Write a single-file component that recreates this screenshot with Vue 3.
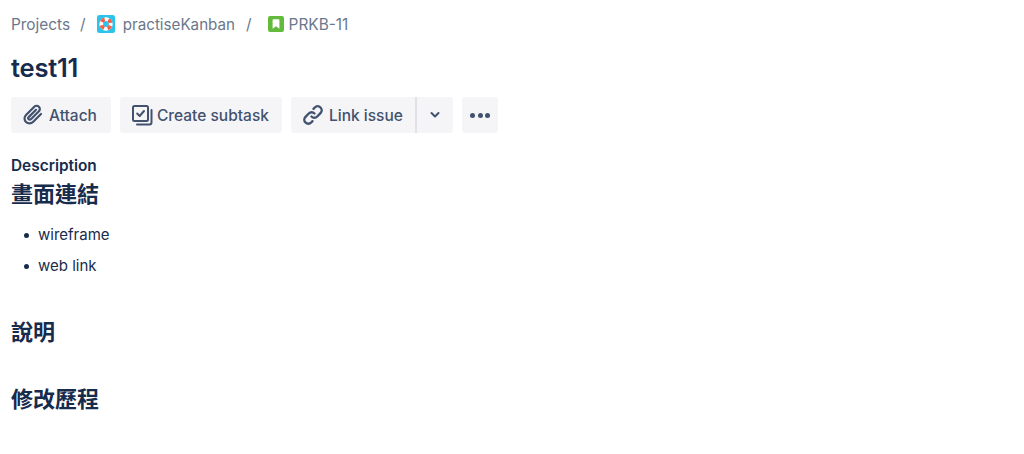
<script setup>
const items = ['wireframe', 'web link']
</script>

<template>
  <main class="page">
    <nav class="crumbs">
      <span>Projects</span>
      <span class="sep first">/</span>
      <svg class="proj" width="18" height="18" viewBox="0 0 18 18">
        <rect width="18" height="18" rx="2.5" fill="#2ac4ea" />
        <circle cx="9" cy="9" r="4.8" fill="none" stroke="#fff" stroke-width="3.8" />
        <circle cx="9" cy="9" r="4.8" fill="none" stroke="#f0604a" stroke-width="3.8" stroke-dasharray="3.77 3.77" stroke-dashoffset="-1.885" />
      </svg>
      <span class="pname">practiseKanban</span>
      <span class="sep second">/</span>
      <svg class="story" width="16" height="16" viewBox="0 0 16 16">
        <rect width="16" height="16" rx="2" fill="#63ba3c" />
        <path d="M4.6 4a.8.8 0 0 1 .8-.8h5.2a.8.8 0 0 1 .8.8v8.8L8 10.2l-3.4 2.6z" fill="#fff" />
      </svg>
      <span>PRKB-11</span>
    </nav>

    <h1>test11</h1>

    <div class="actions">
      <button class="btn attach">
        <svg width="24" height="24" viewBox="0 0 24 24" fill="none" stroke="#42526e" stroke-width="2.2" stroke-linecap="round" stroke-linejoin="round">
          <path d="M20 11l-8 8a4.9 4.9 0 0 1-7-7l8.3-8.3a3.2 3.2 0 0 1 4.6 4.6l-8 8a1.5 1.5 0 0 1-2.2-2.2l7.3-7.3" />
        </svg>
        Attach
      </button>
      <button class="btn subtask">
        <svg width="24" height="24" viewBox="0 0 24 24" fill="none" stroke="#42526e" stroke-width="2" stroke-linecap="round" stroke-linejoin="round">
          <rect x="3" y="3" width="15" height="15" rx="1.5" />
          <path d="M7.2 10.5l2.5 2.5 4.3-5" />
          <path d="M21.5 7v12.5a2 2 0 0 1-2 2H7" />
        </svg>
        Create subtask
      </button>
      <div class="split">
        <button class="btn link">
          <svg width="24" height="24" viewBox="0 0 24 24" fill="none" stroke="#42526e" stroke-width="2.4" stroke-linecap="round" stroke-linejoin="round">
            <path d="M10.5 13.5a4 4 0 0 0 5.7 0l3.3-3.3a4 4 0 0 0-5.7-5.7L12.5 5.8" />
            <path d="M13.5 10.5a4 4 0 0 0-5.7 0l-3.3 3.3a4 4 0 0 0 5.7 5.7l1.3-1.3" />
          </svg>
          Link issue
        </button>
        <button class="btn caret">
          <svg width="12" height="8" viewBox="0 0 12 8" fill="none" stroke="#42526e" stroke-width="2" stroke-linecap="round" stroke-linejoin="round">
            <path d="M2.5 2l3.5 3.5L9.5 2" />
          </svg>
        </button>
      </div>
      <button class="btn more" aria-label="More">
        <i></i><i></i><i></i>
      </button>
    </div>

    <h2 class="label">Description</h2>
    <h3 class="h-first">畫面連結</h3>
    <ul>
      <li v-for="item in items" :key="item">{{ item }}</li>
    </ul>
    <h3 class="h-second">說明</h3>
    <h3 class="h-third">修改歷程</h3>
  </main>
</template>

<style>
html, body { background: #fff; }
</style>

<style scoped>
.page {
  box-sizing: border-box;
  width: 1024px;
  height: 454px;
  padding: 14px 11px 0;
  overflow: hidden;
  font-family: Inter, "Noto Sans CJK TC", sans-serif;
  color: #172b4d;
}
.crumbs {
  display: flex;
  align-items: center;
  height: 20px;
  font-size: 15.4px;
  color: #6b778c;
}
.sep { font-size: 15.4px; }
.sep.first { margin: 0 11px 0 10px; }
.sep.second { margin: 0 16px 0 11px; }
.proj { margin: 0 8px 0 0; flex: none; }
.story { margin: 0 5px 0 0; flex: none; }
.pname { font-size: 15.2px; }
h1 {
  margin: 17px 0 0;
  font-size: 25.5px;
  line-height: 34px;
  font-weight: 600;
  color: #172b4d;
  letter-spacing: -0.2px;
}
.actions {
  display: flex;
  gap: 9px;
  margin-top: 12px;
}
.btn {
  display: flex;
  align-items: center;
  height: 36px;
  padding: 0;
  border: 0;
  border-radius: 3px;
  background: #f5f5f7;
  color: #42526e;
  font: 500 15.5px Inter, sans-serif;
}
.attach { width: 100px; padding-left: 10px; gap: 4px; }
.subtask { width: 162px; padding-left: 10px; gap: 3px; }
.split { display: flex; width: 162px; }
.link {
  width: 126px;
  padding-left: 10px;
  gap: 4px;
  border-radius: 3px 0 0 3px;
  border-right: 2px solid #dfe1e6;
  box-sizing: border-box;
}
.caret {
  width: 36px;
  justify-content: center;
  border-radius: 0 3px 3px 0;
}
.more {
  width: 36px;
  justify-content: center;
  gap: 2.5px;
}
.more i {
  width: 5px;
  height: 5px;
  border-radius: 50%;
  background: #42526e;
}
.label {
  margin: 24px 0 0;
  font-size: 15.4px;
  line-height: 18px;
  font-weight: 600;
  color: #172b4d;
}
h3 {
  margin: 0;
  font-size: 22px;
  line-height: 30px;
  font-weight: 600;
  color: #172b4d;
}
.h-first { margin-top: 4px; }
ul {
  margin: 16px 0 0;
  padding: 0;
  list-style: none;
  font-size: 15px;
  line-height: 20px;
}
li {
  display: flex;
  align-items: center;
  gap: 9px;
  padding-left: 13px;
  margin-bottom: 11px;
}
li::before {
  content: "";
  width: 5px;
  height: 5px;
  border-radius: 50%;
  background: #172b4d;
}
.h-second { margin-top: 41px; }
.h-third { margin-top: 37px; }
</style>
